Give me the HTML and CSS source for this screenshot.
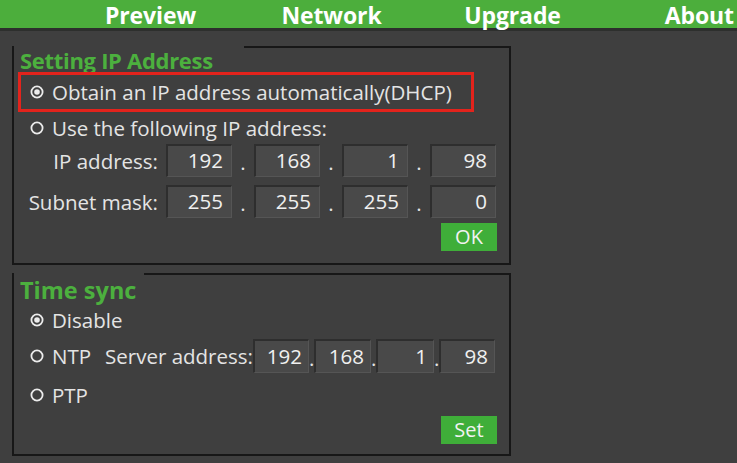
FILE: index.html
```html
<!DOCTYPE html>
<html>
<head>
<meta charset="utf-8">
<link rel="stylesheet" href="styles.css">
</head>
<body>
<header class="topbar">
  <nav class="nav">
    <span class="nav-item">Preview</span>
    <span class="nav-item">Network</span>
    <span class="nav-item">Upgrade</span>
    <span class="nav-item nav-last">About</span>
  </nav>
</header>
<main class="content">
  <section class="panel panel-ip">
    <div class="panel-top"><span class="top-gap gap-ip"></span><span class="top-line"></span></div>
    <div class="legend">Setting IP Address</div>
    <div class="row row-dhcp highlight">
      <svg class="radio" viewBox="0 0 14 14"><circle cx="7" cy="7" r="5.6"/><circle class="dot" cx="7" cy="7" r="2.8"/></svg>
      <span class="label">Obtain an IP address automatically(DHCP)</span>
    </div>
    <div class="row row-static">
      <svg class="radio" viewBox="0 0 14 14"><circle cx="7" cy="7" r="5.6"/></svg>
      <span class="label">Use the following IP address:</span>
    </div>
    <div class="iprow">
      <span class="iplabel">IP address:</span>
      <span class="octet">192</span><span class="sep">.</span>
      <span class="octet">168</span><span class="sep">.</span>
      <span class="octet">1</span><span class="sep">.</span>
      <span class="octet">98</span>
    </div>
    <div class="iprow iprow-mask">
      <span class="iplabel">Subnet mask:</span>
      <span class="octet">255</span><span class="sep">.</span>
      <span class="octet">255</span><span class="sep">.</span>
      <span class="octet">255</span><span class="sep">.</span>
      <span class="octet">0</span>
    </div>
    <div class="actions"><span class="btn btn-ok">OK</span></div>
  </section>

  <section class="panel panel-time">
    <div class="panel-top"><span class="top-gap gap-time"></span><span class="top-line"></span></div>
    <div class="legend legend-time">Time sync</div>
    <div class="row row-disable">
      <svg class="radio" viewBox="0 0 14 14"><circle cx="7" cy="7" r="5.6"/><circle class="dot" cx="7" cy="7" r="2.8"/></svg>
      <span class="label">Disable</span>
    </div>
    <div class="row row-ntp">
      <svg class="radio" viewBox="0 0 14 14"><circle cx="7" cy="7" r="5.6"/></svg>
      <span class="label">NTP</span>
      <span class="label server">Server address:</span>
      <span class="octet o1">192</span><span class="sep small-sep">.</span>
      <span class="octet o2">168</span><span class="sep small-sep">.</span>
      <span class="octet o3">1</span><span class="sep small-sep">.</span>
      <span class="octet o4">98</span>
    </div>
    <div class="row row-ptp">
      <svg class="radio" viewBox="0 0 14 14"><circle cx="7" cy="7" r="5.6"/></svg>
      <span class="label">PTP</span>
    </div>
    <div class="actions actions-time"><span class="btn btn-set">Set</span></div>
  </section>
</main>
</body>
</html>
```
FILE: styles.css
```css
* { box-sizing: border-box; }
html, body { margin: 0; padding: 0; }
body {
  width: 737px;
  height: 463px;
  overflow: hidden;
  background: #3f3f3f;
  font-family: "Open Sans", "Noto Sans", sans-serif;
  color: #e4e4e4;
}
.topbar {
  height: 31px;
  background: #4cae3c;
  border-bottom: 3px solid #2d2f2d;
}
.nav {
  display: flex;
  padding-left: 60px;
  height: 28px;
}
.nav-item {
  flex: 0 0 181px;
  text-align: center;
  color: #ffffff;
  font-weight: 700;
  font-size: 23px;
  line-height: 31px;
  height: 28px;
  white-space: nowrap;
  letter-spacing: -0.1px;
}
.nav-item.nav-last { flex: 0 0 134px; text-align: right; padding-right: 3px; }
.content {
  padding: 15px 0 0 12px;
}
.panel {
  width: 499px;
  border-left: 2px solid #171717;
  border-right: 2px solid #171717;
  border-bottom: 2px solid #171717;
  display: flex;
  flex-direction: column;
}
.panel-ip { height: 219px; }
.panel-time { height: 183px; margin-top: 8px; }
.panel-top { display: flex; height: 2px; }
.top-gap.gap-ip { width: 230px; }
.top-gap.gap-time { width: 130px; }
.top-line { flex: 1; border-top: 2px solid #171717; }
.legend {
  color: #4cb03e;
  font-weight: 700;
  font-size: 22px;
  line-height: 24px;
  height: 24px;
  padding-left: 6px;
  letter-spacing: -0.3px;
  white-space: nowrap;
}
.legend-time { margin-top: 3px; font-size: 23.5px; letter-spacing: 0; }
.row {
  display: flex;
  align-items: center;
  white-space: nowrap;
  font-size: 20.5px;
}
.radio {
  width: 14px;
  height: 14px;
  margin-right: 8px;
  flex: 0 0 14px;
}
.radio circle { fill: none; stroke: #ececec; stroke-width: 1.8; }
.radio circle.dot { fill: #ececec; stroke: none; }
.highlight {
  margin-left: 4px;
  width: 456px;
  height: 40px;
  border: 3px solid #e3231c;
  padding-left: 9px;
}
.row-static { height: 32px; padding-left: 16px; }
.iprow {
  display: flex;
  align-items: center;
  height: 33px;
  font-size: 20.5px;
}
.iprow-mask { margin-top: 8px; }
.iplabel {
  width: 152px;
  text-align: right;
  padding-right: 8px;
  white-space: nowrap;
}
.octet {
  width: 66px;
  height: 33px;
  background: #494949;
  border-top: 2px solid #2e2e2e;
  border-left: 2px solid #2e2e2e;
  border-right: 1px solid #555;
  border-bottom: 1px solid #555;
  text-align: right;
  padding-right: 8px;
  line-height: 29px;
  color: #f0f0f0;
}
.sep {
  width: 22px;
  text-align: center;
  line-height: 33px;
  padding-top: 4px;
}
.actions {
  display: flex;
  justify-content: flex-end;
  padding-right: 12px;
  margin-top: 5px;
}
.btn {
  display: block;
  width: 56px;
  height: 28px;
  background: #3fae39;
  color: #f2f2f2;
  font-size: 20px;
  line-height: 28px;
  text-align: center;
}
.row-disable { height: 36px; padding-left: 16px; margin-top: 0; }
.row-ntp { height: 36px; padding-left: 16px; }
.server { margin-left: 14px; }
.row-ntp .octet { height: 34px; line-height: 30px; padding-right: 6px; }
.row-ntp .o1 { width: 56px; }
.row-ntp .o2 { width: 57px; }
.row-ntp .o3 { width: 58px; }
.row-ntp .o4 { width: 56px; }
.sep.small-sep { width: 5px; text-align: left; }
.row-ptp { height: 42px; padding-left: 16px; }
.actions-time { margin-top: 0; }
```
